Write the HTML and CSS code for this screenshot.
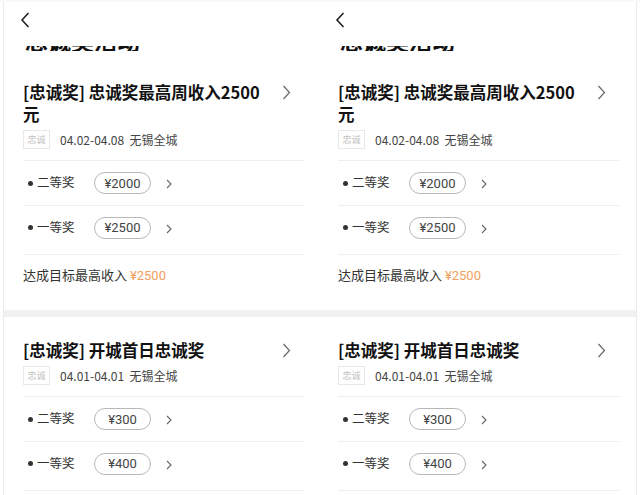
FILE: index.html
```html
<!DOCTYPE html>
<html lang="zh-CN">
<head>
    <meta charset="UTF-8">
    <meta name="viewport" content="width=device-width, initial-scale=1.0">
    <title>忠诚奖</title>
    <link rel="stylesheet" href="styles.css">
</head>

<body>
<div class="page">
    <!-- screen one -->
    <div class="screen">
        <div class="header">
            <svg class="back" width="10" height="16" viewBox="0 0 10 16"><path d="M8.5 1 L2 8 L8.5 15" fill="none" stroke="#222" stroke-width="1.6"/></svg>
        </div>
        <div class="cut-title"><span>忠诚奖活动</span></div>

        <div class="card card-first">
            <div class="card-head">
                <div class="card-title">[忠诚奖] 忠诚奖最高周收入2500元</div>
                <svg class="more" width="9" height="15" viewBox="0 0 9 15"><path d="M1.5 1 L7.5 7.5 L1.5 14" fill="none" stroke="#666" stroke-width="1.2"/></svg>
            </div>
            <div class="meta">
                <span class="tag">忠诚</span>
                <span class="meta-text">04.02-04.08&nbsp;&nbsp;无锡全城</span>
            </div>
            <div class="prize-list">
                <div class="prize">
                    <span class="dot"></span>
                    <span class="prize-name">二等奖</span>
                    <span class="pill">¥2000</span>
                    <svg class="go" width="6" height="10" viewBox="0 0 6 10"><path d="M1 1 L5 5 L1 9" fill="none" stroke="#666" stroke-width="1.1"/></svg>
                </div>
                <div class="prize">
                    <span class="dot"></span>
                    <span class="prize-name">一等奖</span>
                    <span class="pill">¥2500</span>
                    <svg class="go" width="6" height="10" viewBox="0 0 6 10"><path d="M1 1 L5 5 L1 9" fill="none" stroke="#666" stroke-width="1.1"/></svg>
                </div>
            </div>
            <div class="summary">达成目标最高收入 <span class="amount">¥2500</span></div>
        </div>

        <div class="band"></div>

        <div class="card">
            <div class="card-head">
                <div class="card-title">[忠诚奖] 开城首日忠诚奖</div>
                <svg class="more" width="9" height="15" viewBox="0 0 9 15"><path d="M1.5 1 L7.5 7.5 L1.5 14" fill="none" stroke="#666" stroke-width="1.2"/></svg>
            </div>
            <div class="meta">
                <span class="tag">忠诚</span>
                <span class="meta-text">04.01-04.01&nbsp;&nbsp;无锡全城</span>
            </div>
            <div class="prize-list">
                <div class="prize">
                    <span class="dot"></span>
                    <span class="prize-name">二等奖</span>
                    <span class="pill">¥300</span>
                    <svg class="go" width="6" height="10" viewBox="0 0 6 10"><path d="M1 1 L5 5 L1 9" fill="none" stroke="#666" stroke-width="1.1"/></svg>
                </div>
                <div class="prize">
                    <span class="dot"></span>
                    <span class="prize-name">一等奖</span>
                    <span class="pill">¥400</span>
                    <svg class="go" width="6" height="10" viewBox="0 0 6 10"><path d="M1 1 L5 5 L1 9" fill="none" stroke="#666" stroke-width="1.1"/></svg>
                </div>
            </div>
        </div>
    </div>

    <!-- screen two -->
    <div class="screen">
        <div class="header">
            <svg class="back" width="10" height="16" viewBox="0 0 10 16"><path d="M8.5 1 L2 8 L8.5 15" fill="none" stroke="#222" stroke-width="1.6"/></svg>
        </div>
        <div class="cut-title"><span>忠诚奖活动</span></div>

        <div class="card card-first">
            <div class="card-head">
                <div class="card-title">[忠诚奖] 忠诚奖最高周收入2500元</div>
                <svg class="more" width="9" height="15" viewBox="0 0 9 15"><path d="M1.5 1 L7.5 7.5 L1.5 14" fill="none" stroke="#666" stroke-width="1.2"/></svg>
            </div>
            <div class="meta">
                <span class="tag">忠诚</span>
                <span class="meta-text">04.02-04.08&nbsp;&nbsp;无锡全城</span>
            </div>
            <div class="prize-list">
                <div class="prize">
                    <span class="dot"></span>
                    <span class="prize-name">二等奖</span>
                    <span class="pill">¥2000</span>
                    <svg class="go" width="6" height="10" viewBox="0 0 6 10"><path d="M1 1 L5 5 L1 9" fill="none" stroke="#666" stroke-width="1.1"/></svg>
                </div>
                <div class="prize">
                    <span class="dot"></span>
                    <span class="prize-name">一等奖</span>
                    <span class="pill">¥2500</span>
                    <svg class="go" width="6" height="10" viewBox="0 0 6 10"><path d="M1 1 L5 5 L1 9" fill="none" stroke="#666" stroke-width="1.1"/></svg>
                </div>
            </div>
            <div class="summary">达成目标最高收入 <span class="amount">¥2500</span></div>
        </div>

        <div class="band"></div>

        <div class="card">
            <div class="card-head">
                <div class="card-title">[忠诚奖] 开城首日忠诚奖</div>
                <svg class="more" width="9" height="15" viewBox="0 0 9 15"><path d="M1.5 1 L7.5 7.5 L1.5 14" fill="none" stroke="#666" stroke-width="1.2"/></svg>
            </div>
            <div class="meta">
                <span class="tag">忠诚</span>
                <span class="meta-text">04.01-04.01&nbsp;&nbsp;无锡全城</span>
            </div>
            <div class="prize-list">
                <div class="prize">
                    <span class="dot"></span>
                    <span class="prize-name">二等奖</span>
                    <span class="pill">¥300</span>
                    <svg class="go" width="6" height="10" viewBox="0 0 6 10"><path d="M1 1 L5 5 L1 9" fill="none" stroke="#666" stroke-width="1.1"/></svg>
                </div>
                <div class="prize">
                    <span class="dot"></span>
                    <span class="prize-name">一等奖</span>
                    <span class="pill">¥400</span>
                    <svg class="go" width="6" height="10" viewBox="0 0 6 10"><path d="M1 1 L5 5 L1 9" fill="none" stroke="#666" stroke-width="1.1"/></svg>
                </div>
            </div>
        </div>
    </div>
</div>
</body>
</html>
```

FILE: styles.css
```css
* {
    box-sizing: border-box;
    margin: 0;
    padding: 0;
}

body {
    background: #fff;
    color: #222;
    font-family: "Noto Sans CJK SC", "Noto Sans", sans-serif;
    height: 495px;
    overflow: hidden;
}

.page {
    display: flex;
    height: 100%;
    border-top: 2px solid #f8f8f8;
}

.screen {
    --pl: 19px;
    --pr: 10px;
    width: 312px;
    margin-left: 3px;
    border-left: 1px solid #ececec;
}

.screen + .screen {
    --pl: 23px;
    --pr: 16px;
    width: 322px;
    margin-left: 0;
    border-left: none;
    border-right: 1px solid #ececec;
}

.header {
    height: 36px;
    display: flex;
    align-items: center;
    padding-left: calc(var(--pl) - 3px);
}

/* page heading scrolled up under the header, only its foot shows */
.cut-title {
    height: 5px;
    overflow: hidden;
    margin-top: 8px;
    padding-left: calc(var(--pl) + 2px);
}

.cut-title span {
    display: block;
    font-size: 23px;
    font-weight: 700;
    line-height: 23px;
    margin-top: -17px;
    color: #111;
}

.card {
    padding: 22px var(--pr) 0 var(--pl);
}

.card-first {
    padding-top: 30px;
}

.card-head {
    display: flex;
    justify-content: space-between;
    align-items: flex-start;
}

.card-title {
    width: 248px;
    font-size: 16.5px;
    font-weight: 700;
    line-height: 22px;
    color: #111;
}

.more {
    margin-top: 4px;
    margin-right: 14px;
    flex-shrink: 0;
}

.meta {
    display: flex;
    align-items: center;
    margin-top: 5px;
}

.tag {
    width: 27px;
    height: 19px;
    display: flex;
    align-items: center;
    justify-content: center;
    border: 1px solid #e8e8e8;
    font-size: 9px;
    color: #c2c2c2;
}

.meta-text {
    margin-left: 10px;
    font-size: 12px;
    color: #444;
}

.prize-list {
    margin-top: 11px;
    border-top: 1px solid #efefef;
    border-bottom: 1px solid #efefef;
    padding-bottom: 5px;
}

.prize {
    height: 44px;
    display: flex;
    align-items: center;
}

.prize + .prize {
    border-top: 1px solid #efefef;
}

.dot {
    width: 5px;
    height: 5px;
    margin-left: 5px;
    border-radius: 50%;
    background: #333;
}

.prize-name {
    width: 57px;
    margin-left: 4px;
    font-size: 12.5px;
    color: #333;
    margin-top: -3px;
}

.pill {
    width: 57px;
    height: 22px;
    border: 1px solid #b8b8b8;
    border-radius: 11px;
    display: flex;
    align-items: center;
    justify-content: center;
    font-family: "Roboto", sans-serif;
    font-size: 13px;
    color: #444;
}

.go {
    margin-left: 15px;
    margin-top: 2px;
}

.summary {
    padding: 11px 0 25px;
    font-size: 13px;
    line-height: 18px;
    color: #333;
}

.amount {
    font-family: "Roboto", sans-serif;
    color: #f2a060;
}

.band {
    height: 7px;
    background: #f1f1f1;
}
```
